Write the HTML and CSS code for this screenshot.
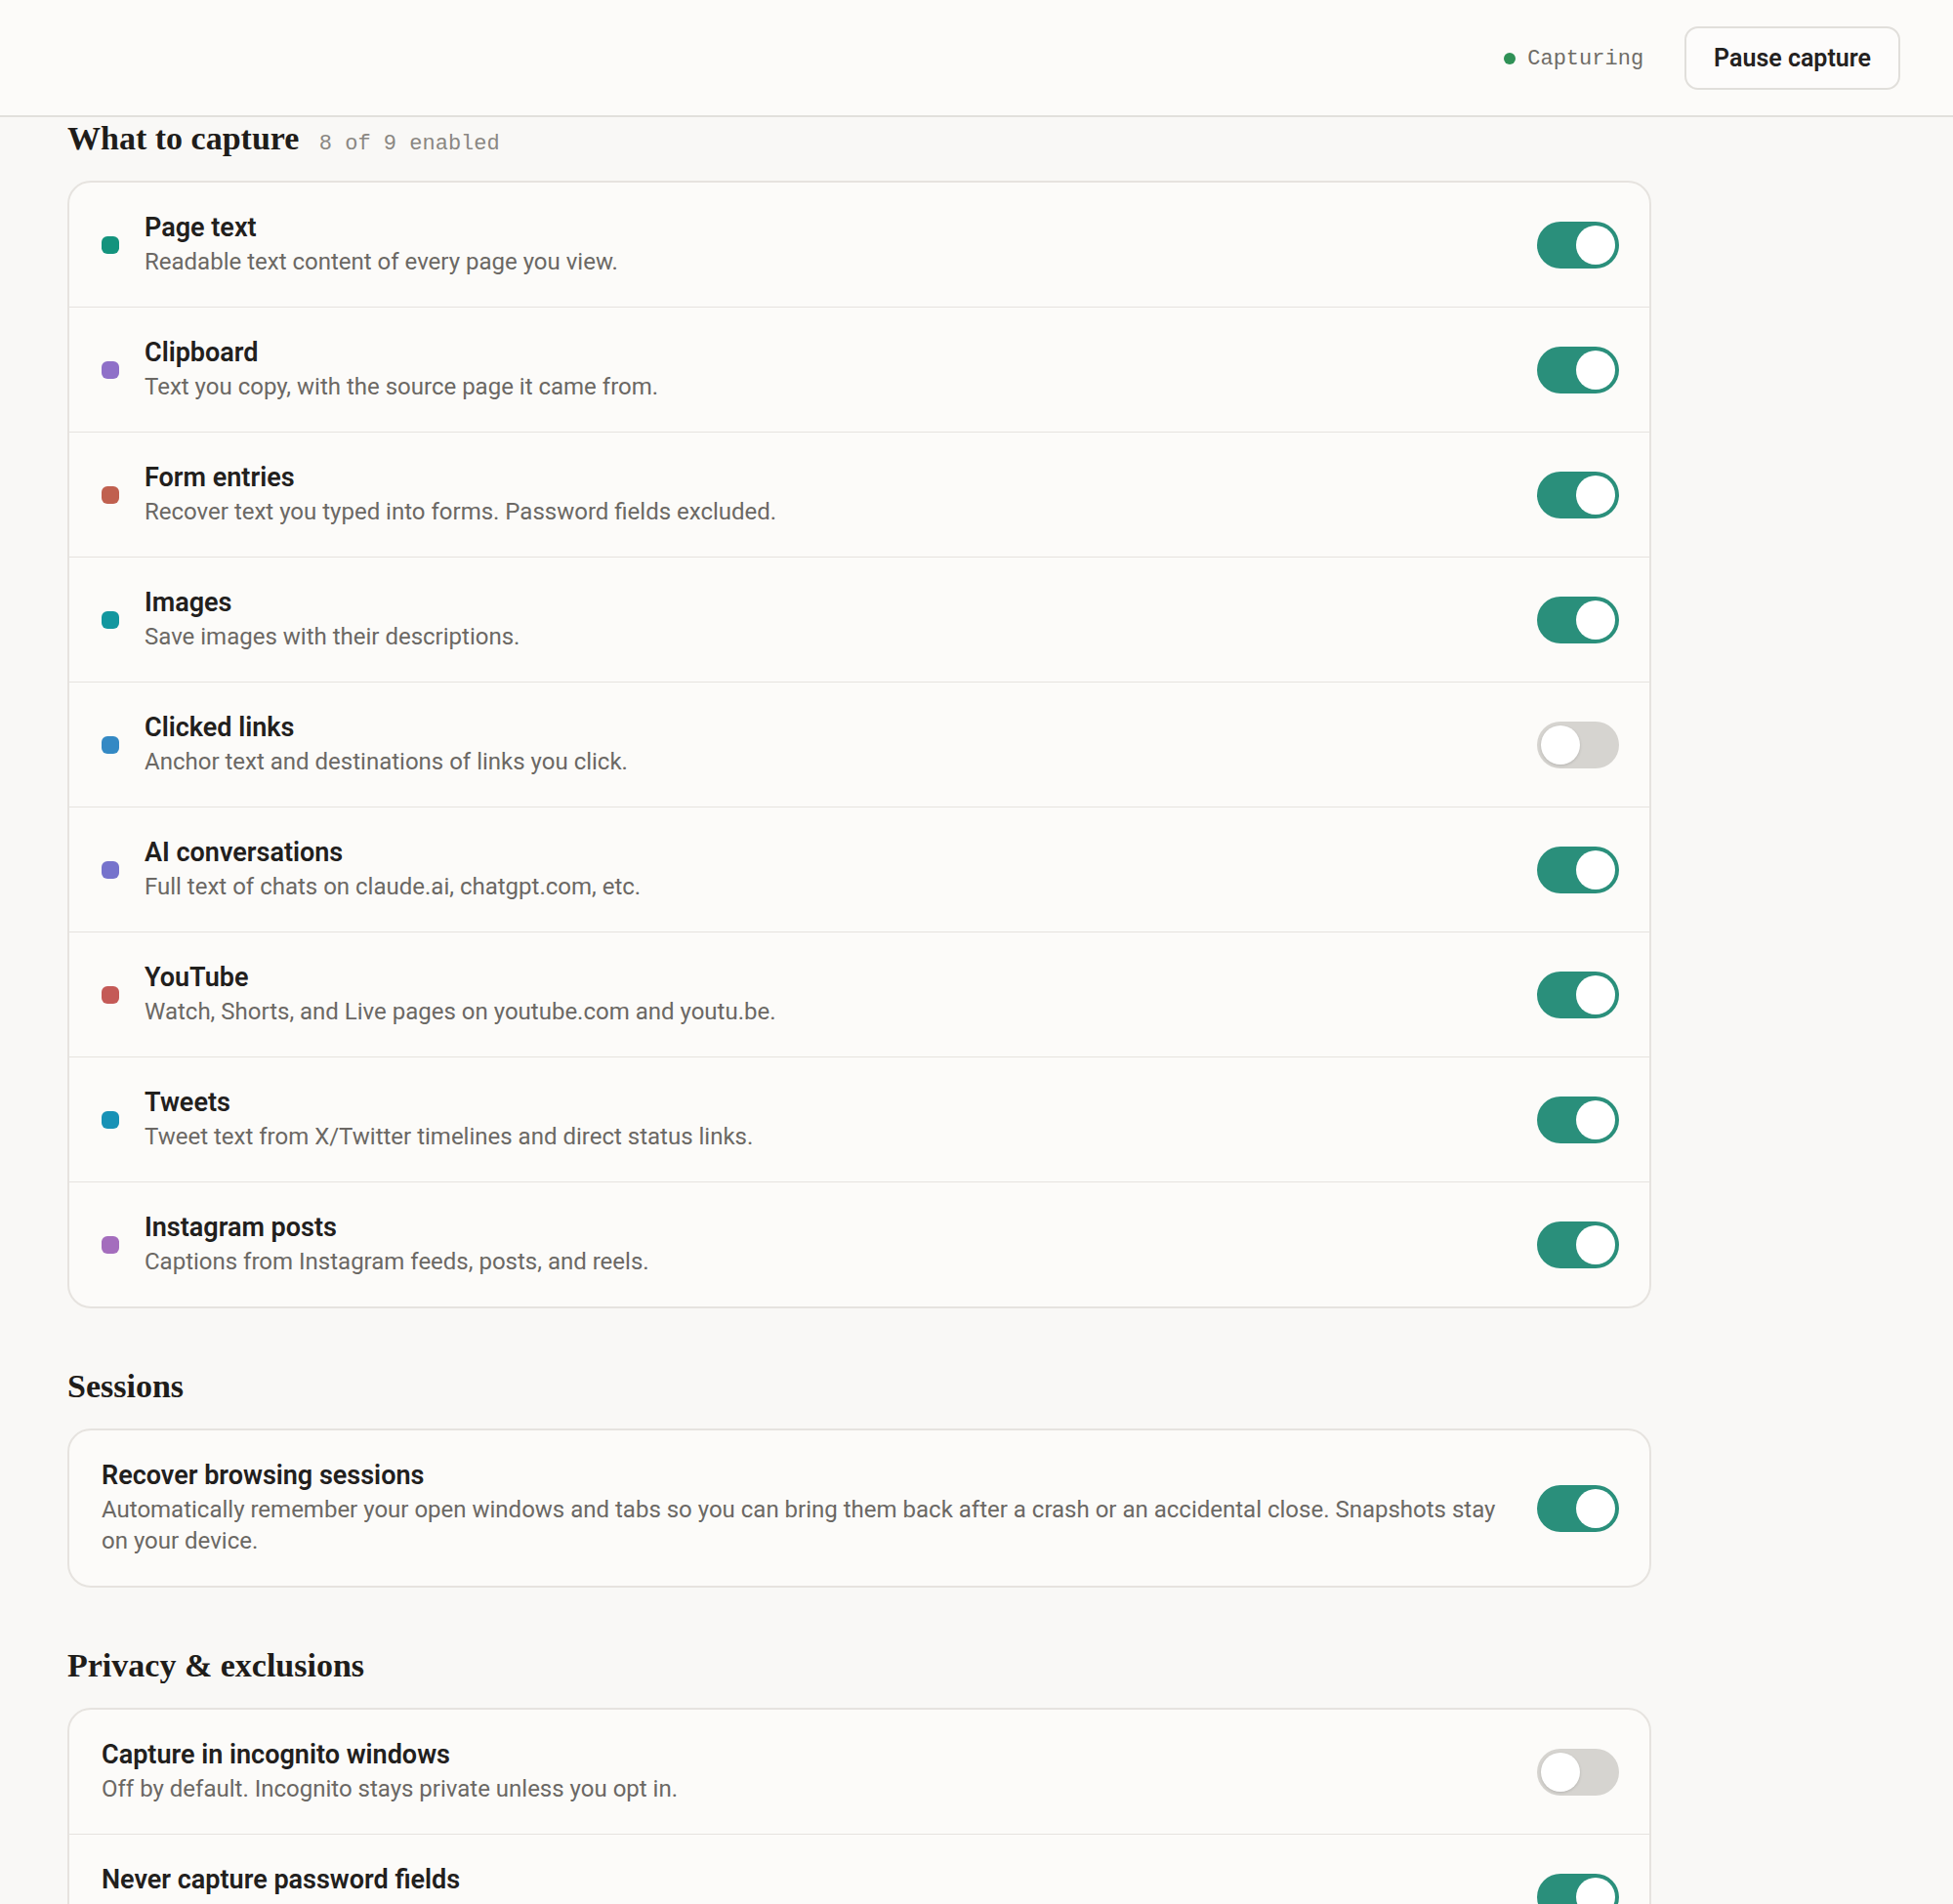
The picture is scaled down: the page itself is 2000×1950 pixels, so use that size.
FILE: index.html
```html
<!DOCTYPE html>
<html lang="en">
<head>
    <meta charset="UTF-8">
    <meta name="viewport" content="width=device-width, initial-scale=1.0">
    <title>Capture settings</title>
    <link rel="stylesheet" href="styles.css">
</head>
<body>
    <header class="topbar">
        <div class="status">
            <span class="status-dot"></span>
            <span class="status-label">Capturing</span>
        </div>
        <button class="pause-btn" type="button">Pause capture</button>
    </header>

    <main class="content">
        <section class="section">
            <h2 class="section-title">What to capture <span class="count">8 of 9 enabled</span></h2>
            <div class="card">
                <div class="row">
                    <span class="dot" style="background:#13937d"></span>
                    <div class="text">
                        <div class="title">Page text</div>
                        <div class="desc">Readable text content of every page you view.</div>
                    </div>
                    <span class="toggle on"></span>
                </div>
                <div class="row">
                    <span class="dot" style="background:#8f70c8"></span>
                    <div class="text">
                        <div class="title">Clipboard</div>
                        <div class="desc">Text you copy, with the source page it came from.</div>
                    </div>
                    <span class="toggle on"></span>
                </div>
                <div class="row">
                    <span class="dot" style="background:#c0604f"></span>
                    <div class="text">
                        <div class="title">Form entries</div>
                        <div class="desc">Recover text you typed into forms. Password fields excluded.</div>
                    </div>
                    <span class="toggle on"></span>
                </div>
                <div class="row">
                    <span class="dot" style="background:#12979f"></span>
                    <div class="text">
                        <div class="title">Images</div>
                        <div class="desc">Save images with their descriptions.</div>
                    </div>
                    <span class="toggle on"></span>
                </div>
                <div class="row">
                    <span class="dot" style="background:#3489c4"></span>
                    <div class="text">
                        <div class="title">Clicked links</div>
                        <div class="desc">Anchor text and destinations of links you click.</div>
                    </div>
                    <span class="toggle"></span>
                </div>
                <div class="row">
                    <span class="dot" style="background:#7673cc"></span>
                    <div class="text">
                        <div class="title">AI conversations</div>
                        <div class="desc">Full text of chats on claude.ai, chatgpt.com, etc.</div>
                    </div>
                    <span class="toggle on"></span>
                </div>
                <div class="row">
                    <span class="dot" style="background:#c45a57"></span>
                    <div class="text">
                        <div class="title">YouTube</div>
                        <div class="desc">Watch, Shorts, and Live pages on youtube.com and youtu.be.</div>
                    </div>
                    <span class="toggle on"></span>
                </div>
                <div class="row">
                    <span class="dot" style="background:#1892b6"></span>
                    <div class="text">
                        <div class="title">Tweets</div>
                        <div class="desc">Tweet text from X/Twitter timelines and direct status links.</div>
                    </div>
                    <span class="toggle on"></span>
                </div>
                <div class="row">
                    <span class="dot" style="background:#a46dbd"></span>
                    <div class="text">
                        <div class="title">Instagram posts</div>
                        <div class="desc">Captions from Instagram feeds, posts, and reels.</div>
                    </div>
                    <span class="toggle on"></span>
                </div>
            </div>
        </section>

        <section class="section">
            <h2 class="section-title">Sessions</h2>
            <div class="card">
                <div class="row">
                    <div class="text">
                        <div class="title">Recover browsing sessions</div>
                        <div class="desc">Automatically remember your open windows and tabs so you can bring them back after a crash or an accidental close. Snapshots stay on your device.</div>
                    </div>
                    <span class="toggle on"></span>
                </div>
            </div>
        </section>

        <section class="section">
            <h2 class="section-title">Privacy &amp; exclusions</h2>
            <div class="card">
                <div class="row">
                    <div class="text">
                        <div class="title">Capture in incognito windows</div>
                        <div class="desc">Off by default. Incognito stays private unless you opt in.</div>
                    </div>
                    <span class="toggle"></span>
                </div>
                <div class="row">
                    <div class="text">
                        <div class="title">Never capture password fields</div>
                        <div class="desc">Always on. Passwords, card numbers and one-time codes are skipped.</div>
                    </div>
                    <span class="toggle on"></span>
                </div>
            </div>
        </section>
    </main>
</body>
</html>
```

FILE: styles.css
```css
body {
    margin: 0;
    padding: 0;
    background-color: #f9f8f6;
    color: #22201d;
    font-family: Roboto, "Liberation Sans", sans-serif;
}

.topbar {
    height: 118px;
    display: flex;
    align-items: center;
    justify-content: flex-end;
    gap: 42px;
    padding: 0 54px;
    background-color: #fcfbf9;
    border-bottom: 2px solid #e2e0dc;
}
.status {
    display: flex;
    align-items: center;
    gap: 12px;
    padding-top: 2px;
}
.status-dot {
    width: 12px;
    height: 12px;
    border-radius: 50%;
    background-color: #2f9156;
}
.status-label {
    font-family: "Liberation Mono", monospace;
    font-size: 22px;
    color: #6f6c67;
}
.pause-btn {
    height: 65px;
    padding: 0 28px;
    font-family: Roboto, "Liberation Sans", sans-serif;
    font-size: 25px;
    font-weight: 600;
    color: #24221f;
    background-color: #fdfcfb;
    border: 2px solid #e1dfdb;
    border-radius: 14px;
}

.content {
    width: 1622px;
    padding: 4px 0 40px 69px;
}
.section {
    margin-bottom: 62px;
}
.section-title {
    margin: 0 0 25px 0;
    font-family: "Liberation Serif", serif;
    font-size: 34px;
    line-height: 36px;
    font-weight: 700;
    color: #1f1d1a;
}
.count {
    margin-left: 12px;
    font-family: "Liberation Mono", monospace;
    font-size: 22px;
    line-height: 1;
    font-weight: 400;
    color: #8a8782;
}

.card {
    background-color: #fcfbf9;
    border: 2px solid #e6e3df;
    border-radius: 24px;
    overflow: hidden;
}
.row {
    display: flex;
    align-items: center;
    padding: 30px 31px 30px 33px;
    border-bottom: 1px solid #e6e3df;
}
.row:last-child {
    border-bottom: none;
}
.dot {
    flex: none;
    width: 18px;
    height: 18px;
    margin-right: 26px;
    border-radius: 6px;
}
.text {
    flex: 1;
    margin-right: 32px;
}
.title {
    font-size: 27px;
    line-height: 33px;
    font-weight: 600;
    color: #22201d;
}
.desc {
    margin-top: 2px;
    font-size: 24px;
    line-height: 32px;
    color: #6b6864;
}

/* switch: teal track when on, grey when off */
.toggle {
    flex: none;
    position: relative;
    width: 84px;
    height: 48px;
    border-radius: 24px;
    background-color: #d6d4d0;
}
.toggle::after {
    content: "";
    position: absolute;
    top: 4px;
    left: 4px;
    width: 40px;
    height: 40px;
    border-radius: 50%;
    background-color: #fff;
    box-shadow: 0 1px 3px rgba(0,0,0,0.15);
}
.toggle.on {
    background-color: #2a8f7b;
}
.toggle.on::after {
    left: 40px;
    box-shadow: none;
}
```
